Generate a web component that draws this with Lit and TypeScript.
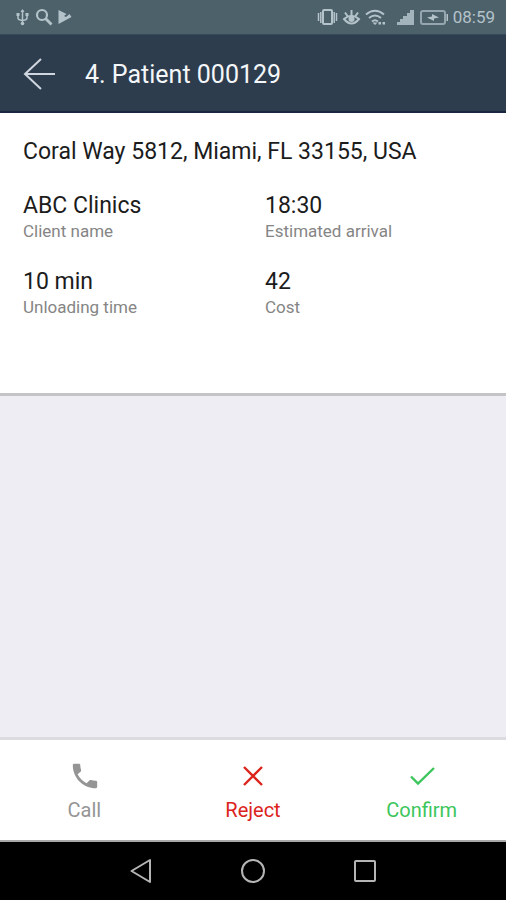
import { LitElement, html, css, svg } from "lit";
import { customElement } from "lit/decorators.js";

interface Fact {
  value: string;
  label: string;
}

const facts: Fact[] = [
  { value: "ABC Clinics", label: "Client name" },
  { value: "18:30", label: "Estimated arrival" },
  { value: "10 min", label: "Unloading time" },
  { value: "42", label: "Cost" },
];

const callIcon = svg`<path fill="currentColor" d="M7.600 12.300c2 3.900 5.200 7 9 9l3-3c.4-.4 1-.5 1.400-.3 1.500.5 3.100.8 4.800.8.8 0 1.400.6 1.400 1.300v4.700c0 .8-.6 1.400-1.400 1.400C13.100 26.200 2.800 15.900 2.800 3.200c0-.8.6-1.400 1.400-1.400h4.700c.8 0 1.400.6 1.400 1.400 0 1.700.3 3.300.8 4.800.2.500 0 1-.3 1.400z"/>`;
const rejectIcon = svg`<path fill="none" stroke="currentColor" stroke-width="2.400" d="M5 5 23 23M23 5 5 23"/>`;
const confirmIcon = svg`<path fill="none" stroke="currentColor" stroke-width="2.400" d="M3 14.500 10 21.500 26 6"/>`;

const actions = [
  { name: "Call", tone: "muted", icon: callIcon },
  { name: "Reject", tone: "danger", icon: rejectIcon },
  { name: "Confirm", tone: "success", icon: confirmIcon },
];

@customElement("status-bar")
export class StatusBar extends LitElement {
  static styles = css`
    :host {
      display: flex;
      justify-content: space-between;
      align-items: center;
      height: 34px;
      padding: 0 11px 0 14px;
      background: #4d616b;
      color: #b4c3ca;
      font-size: 17px;
      line-height: 34px;
    }
    .group {
      display: flex;
      align-items: center;
      gap: 4px;
    }
    svg {
      display: block;
    }
  `;

  render() {
    return html`
      <div class="group">
        <svg width="17" height="18" viewBox="0 0 17 18" fill="none" stroke="currentColor" stroke-width="1.500" aria-hidden="true">
          <path d="M8.500 2v13M4 6.500v3.500q0 2 4.500 2.500 4.500-.5 4.500-2.500V6.500" />
          <path fill="currentColor" stroke="none" d="M8.500 1 10.500 4h-4zM2.500 5h3v3h-3zM11.500 5h3v3h-3z" />
          <circle cx="8.500" cy="15.500" r="1.800" fill="currentColor" stroke="none" />
        </svg>
        <svg width="18" height="18" viewBox="0 0 18 18" fill="none" stroke="currentColor" aria-hidden="true">
          <circle cx="7" cy="7" r="5" stroke-width="2.200" />
          <path stroke-width="2.800" d="m10.500 10.500 6 6" />
        </svg>
        <svg width="16" height="18" viewBox="0 0 16 18" fill="currentColor" aria-hidden="true">
          <path d="M1.500 2 9.500 6 7 8l2 1 3.500-3 2 3-13 7z" />
        </svg>
      </div>
      <div class="group">
        <svg width="21" height="18" viewBox="0 0 21 18" fill="none" stroke="currentColor" stroke-width="1.500" aria-hidden="true">
          <rect x="6" y="2" width="9" height="14" rx="1" stroke-width="2" />
          <path d="M3.800 4v11M17.200 4v11M1.500 5v8M19.500 5v8" />
        </svg>
        <svg width="19" height="18" viewBox="0 0 19 18" fill="none" stroke="currentColor" stroke-width="2" aria-hidden="true">
          <path d="M2 11Q9.500 4.500 17 11 9.500 20 2 11zM9.500 2v5M3 4.500 5.500 8M16 4.500 13.500 8" />
          <circle cx="9.500" cy="11" r="3" fill="currentColor" stroke="none" />
        </svg>
        <svg width="21" height="18" viewBox="0 0 21 18" fill="none" stroke="currentColor" stroke-width="2" aria-hidden="true">
          <path d="M1 6.500q9-7.500 18 0M4 10q6-5 12 0M7 13.500q3-2.500 6 0" />
          <path fill="currentColor" stroke="none" d="m10 17-2.500-2.500h5zM13.500 14h2.500v2.500h-2.500zM17.500 14H20v2.500h-2.500z" />
        </svg>
        <svg width="26" height="18" viewBox="0 0 26 18" fill="currentColor" aria-hidden="true">
          <path d="M7 17v-3h3v-3h3V8h4V5h3V2h4v15z" opacity=".85" />
        </svg>
        <svg width="29" height="18" viewBox="0 0 29 18" aria-hidden="true">
          <rect x="1" y="3" width="24" height="13" rx="2" fill="none" stroke="currentColor" stroke-width="2" opacity=".7" />
          <path fill="currentColor" d="M26.500 6H28v7h-1.500zM7 9.500l5-1V6l7 3.500-5 1V13z" />
        </svg>
        <span>08:59</span>
      </div>
    `;
  }
}

@customElement("app-root")
export class AppRoot extends LitElement {
  static styles = css`
    :host {
      display: flex;
      flex-direction: column;
      min-height: 100vh;
      background: #eeedf3;
      color: #1c1c1c;
      font-family: Roboto, "Liberation Sans", sans-serif;
    }
    button {
      display: flex;
      align-items: center;
      justify-content: center;
      margin: 0;
      padding: 0;
      border: 0;
      background: none;
      color: inherit;
      font: inherit;
      cursor: pointer;
    }
    svg {
      display: block;
    }
    .header {
      display: flex;
      align-items: flex-start;
      gap: 29px;
      padding: 22px 23px 18px;
      border-top: 1px solid #34495a;
      border-bottom: 2px solid #1b2740;
      background: #2d3d4d;
      color: #f4f7fa;
    }
    .back {
      color: #d0d6df;
    }
    h1 {
      margin: 0;
      font-size: 25px;
      line-height: 36px;
      font-weight: 400;
    }
    .card {
      padding: 24px 23px 76px;
      background: #fff;
      border-bottom: 3px solid #c4c4c6;
    }
    .address,
    .value {
      margin: 0;
      font-size: 23px;
      line-height: 30px;
    }
    .facts {
      display: grid;
      grid-template-columns: 1fr 1fr;
      row-gap: 26px;
      column-gap: 24px;
      margin: 24px 0 0;
    }
    .fact {
      display: flex;
      flex-direction: column-reverse;
    }
    .label {
      font-size: 17px;
      line-height: 20px;
      color: #858585;
    }
    .actions {
      display: grid;
      grid-template-columns: repeat(3, 1fr);
      margin-top: auto;
      border-top: 3px solid #dcdbe0;
      border-bottom: 2px solid #a9a9a9;
      background: #fff;
    }
    .action {
      flex-direction: column;
      gap: 7px;
      padding: 22px 0 17px;
      font-size: 20px;
      line-height: 26px;
    }
    .muted {
      color: #959595;
    }
    .danger {
      color: #dc241c;
    }
    .success {
      color: #3cc65c;
    }
    .system {
      display: flex;
      justify-content: center;
      gap: 84px;
      padding: 15px 0;
      background: #000;
      color: #b5b5b5;
    }
  `;

  render() {
    return html`
      <status-bar></status-bar>
      <header class="header">
        <button class="back" aria-label="Back">
          <svg width="33" height="34" viewBox="0 0 33 34" fill="none" stroke="currentColor" stroke-width="2">
            <path d="M32 17H2M18 2 2 17l16 15" />
          </svg>
        </button>
        <h1>4. Patient 000129</h1>
      </header>
      <main class="card">
        <p class="address">Coral Way 5812, Miami, FL 33155, USA</p>
        <dl class="facts">
          ${facts.map(
            (fact) => html`
              <div class="fact">
                <dt class="label">${fact.label}</dt>
                <dd class="value">${fact.value}</dd>
              </div>
            `
          )}
        </dl>
      </main>
      <footer class="actions">
        ${actions.map(
          (action) => html`
            <button class="action ${action.tone}">
              <svg width="28" height="28" viewBox="0 0 28 28" aria-hidden="true">${action.icon}</svg>
              <span>${action.name}</span>
            </button>
          `
        )}
      </footer>
      <nav class="system">
        <button aria-label="System back">
          <svg width="28" height="28" viewBox="0 0 28 28" fill="none" stroke="currentColor" stroke-width="2" stroke-linejoin="round">
            <path d="M23 3v22L4.500 14z" />
          </svg>
        </button>
        <button aria-label="Home">
          <svg width="28" height="28" viewBox="0 0 28 28" fill="none" stroke="currentColor" stroke-width="2">
            <circle cx="14" cy="14" r="11" />
          </svg>
        </button>
        <button aria-label="Recent apps">
          <svg width="28" height="28" viewBox="0 0 28 28" fill="none" stroke="currentColor" stroke-width="2">
            <rect x="4" y="4" width="20" height="20" rx="1" />
          </svg>
        </button>
      </nav>
    `;
  }
}
